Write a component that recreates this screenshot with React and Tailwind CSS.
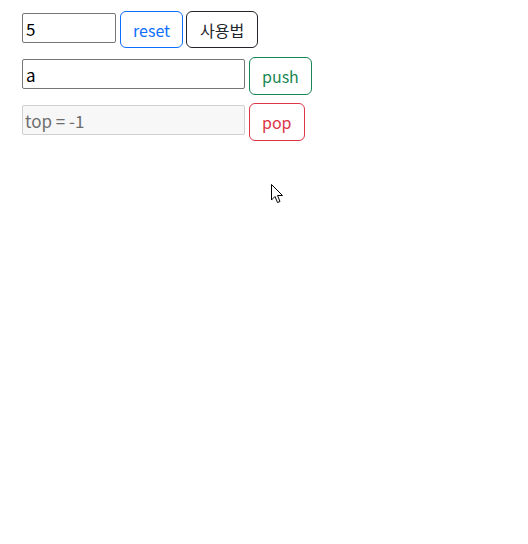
export default function App() {
  const font = { fontFamily: '"Noto Sans CJK KR", "Noto Sans", sans-serif' }

  return (
    <div className="relative w-[528px] h-[544px] bg-white text-[#212529]" style={font}>
      <div className="pl-[22px] pt-[11px] flex flex-col gap-[9px]">
        {/* row 1 */}
        <div className="flex items-start h-[37px]">
          <input
            defaultValue="5"
            className="mt-[2px] w-[94px] h-[30px] border border-[#767676] rounded-[2px] px-[3px] text-[17px] text-black outline-none"
            style={font}
          />
          <button className="ml-[4px] h-[37px] px-[12px] border border-[#0d6efd] text-[#0d6efd] rounded-[6px] text-[16px]">
            reset
          </button>
          <button className="ml-[3px] h-[37px] px-[13px] border border-[#212529] text-[#212529] rounded-[6px] text-[16px]">
            사용법
          </button>
        </div>

        {/* row 2 */}
        <div className="flex items-start h-[38px]">
          <input
            defaultValue="a"
            className="mt-[2px] w-[223px] h-[30px] border border-[#767676] rounded-[2px] px-[3px] text-[17px] text-black outline-none"
            style={font}
          />
          <button className="ml-[4px] h-[38px] px-[12px] border border-[#198754] text-[#198754] rounded-[6px] text-[16px]">
            push
          </button>
        </div>

        {/* row 3 */}
        <div className="flex items-start h-[38px] -mt-[1px]">
          <input
            disabled
            defaultValue="top = -1"
            className="mt-[2px] w-[223px] h-[30px] border border-[#d0d0d0] bg-[#f7f7f7] rounded-[2px] px-[2px] text-[17px] text-[#6d6d6d] outline-none"
            style={font}
          />
          <button className="ml-[4px] h-[38px] px-[12px] border border-[#dc3545] text-[#dc3545] rounded-[6px] text-[16px]">
            pop
          </button>
        </div>
      </div>

      {/* mouse cursor */}
      <svg className="absolute left-[271px] top-[184px]" width="13" height="21" viewBox="0 0 13 21">
        <path d="M0.5 0.5 L0.5 16 L4 12.5 L6.5 18.5 L9 17.5 L6.5 11.5 L11.5 11.5 Z" fill="white" stroke="black" strokeWidth="1" strokeLinejoin="miter" />
      </svg>
    </div>
  )
}
